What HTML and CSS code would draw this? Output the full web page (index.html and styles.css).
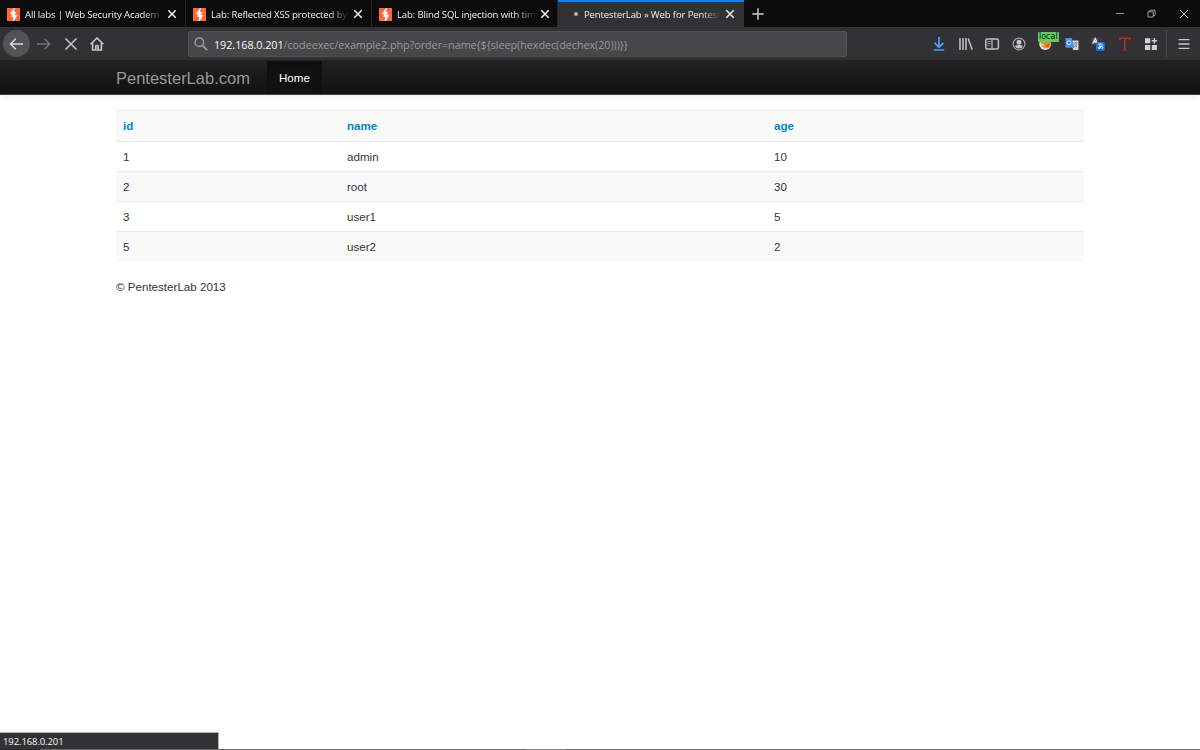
FILE: index.html
```
<!DOCTYPE html>
<html lang="en">
<head>
    <meta charset="UTF-8">
    <title>PentesterLab » Web for Pentester</title>
    <link rel="stylesheet" href="styles.css">
</head>
<body>
    <!-- shared icons -->
    <svg class="sprite">
        <symbol id="bolt" viewBox="0 0 13 13">
            <rect width="13" height="13" fill="#ff6633"/>
            <path d="M7.2 0L2.8 5.8L5.9 6.8L3.4 8.3L6.3 9.3L5.6 13H6.6L10.4 7.3L7.3 6.2L9.6 4.5L6.9 3.5L8 0Z" fill="#fff"/>
        </symbol>
        <symbol id="close" viewBox="0 0 10 10">
            <path d="M1.3 1.3L8.7 8.7M8.7 1.3L1.3 8.7" fill="none" stroke="currentColor" stroke-width="1.5"/>
        </symbol>
    </svg>

    <div class="tabs">
        <div class="tab">
            <svg class="favicon"><use href="#bolt"/></svg>
            <span class="title">All labs | Web Security Academ</span>
            <svg class="close"><use href="#close"/></svg>
        </div>
        <div class="tab">
            <svg class="favicon"><use href="#bolt"/></svg>
            <span class="title">Lab: Reflected XSS protected by</span>
            <svg class="close"><use href="#close"/></svg>
        </div>
        <div class="tab">
            <svg class="favicon"><use href="#bolt"/></svg>
            <span class="title">Lab: Blind SQL injection with tim</span>
            <svg class="close"><use href="#close"/></svg>
        </div>
        <div class="tab active">
            <span class="throbber"></span>
            <span class="title">PentesterLab » Web for Pentest</span>
            <svg class="close"><use href="#close"/></svg>
        </div>
        <svg class="new-tab" viewBox="0 0 12 12"><path d="M6 0.3V11.7M0.3 6H11.7" stroke="#d0d0d0" stroke-width="1.4"/></svg>
        <div class="window-buttons">
            <svg width="8" height="10" viewBox="0 0 8 10"><path d="M0 4.5H8" stroke="#999" stroke-width="1"/></svg>
            <svg width="9" height="9" viewBox="0 0 9 9"><path d="M1 2.8H6.2V8H1ZM2.8 2.8V1.2H8V6.4H6.2" fill="none" stroke="#aaa" stroke-width="0.9"/></svg>
            <svg width="10" height="10" viewBox="0 0 10 10"><path d="M1 1L9 9M9 1L1 9" stroke="#c4c4c4" stroke-width="1"/></svg>
        </div>
    </div>

    <div class="toolbar">
        <div class="nav-buttons">
            <span class="back"><svg width="16" height="16" viewBox="0 0 16 16"><path d="M14 8H1.8M6.8 2.8L1.6 8L6.8 13.2" fill="none" stroke="#d8d8d9" stroke-width="1.6"/></svg></span>
            <svg width="16" height="16" viewBox="0 0 16 16"><path d="M1 8H13.8M8.5 2.8L13.8 8L8.5 13.2" fill="none" stroke="#727274" stroke-width="1.5"/></svg>
            <svg width="14" height="14" viewBox="0 0 14 14"><path d="M1.5 1.5L12.5 12.5M12.5 1.5L1.5 12.5" stroke="#c8c8c9" stroke-width="1.5"/></svg>
            <svg width="14" height="14" viewBox="0 0 14 14"><path d="M0.6 7.2L7 1L13.4 7.2M2.6 6V13H11.4V6" fill="none" stroke="#c8c8c9" stroke-width="1.6"/><path d="M5.5 13V8.3H8.5V13" fill="#999" stroke="#c8c8c9" stroke-width="1"/></svg>
        </div>
        <div class="urlbar">
            <svg width="14" height="14" viewBox="0 0 14 14"><circle cx="5.3" cy="5.3" r="4.3" fill="none" stroke="#98989a" stroke-width="1.5"/><path d="M8.5 8.5L13.2 13.2" stroke="#98989a" stroke-width="1.8"/></svg>
            <span class="url"><b>192.168.0.201</b>/codeexec/example2.php?order=name{${sleep(hexdec(dechex(20)))}}</span>
        </div>
        <div class="extensions">
            <svg viewBox="0 0 16 16"><path d="M8 1V11M3.5 6.8L8 11.2L12.5 6.8M2.8 14H13.2" fill="none" stroke="#45a1ff" stroke-width="1.7"/></svg>
            <svg viewBox="0 0 16 16"><path d="M2 2V14M5 2V14M8 2V14M10.2 2.6L14.2 13.8" fill="none" stroke="#bbbbbc" stroke-width="1.6"/></svg>
            <svg viewBox="0 0 16 16"><rect x="1.8" y="2.9" width="12.6" height="10.2" rx="1.7" fill="none" stroke="#c0c0c1" stroke-width="1.5"/><path d="M8 3V13" stroke="#c0c0c1" stroke-width="1.2"/><path d="M3.5 5.5H6.5M3.5 7.5H6.5M3.5 9.3H5.5" stroke="#99999a" stroke-width="1"/></svg>
            <svg viewBox="0 0 16 16"><circle cx="8" cy="8" r="5.9" fill="none" stroke="#a5a5a6" stroke-width="1.2"/><circle cx="8" cy="6.3" r="2.5" fill="#c5c5c6"/><path d="M4 10.2C5.5 8.7 10.5 8.7 12 10.2Q10.8 12.4 8 12.4T4 10.2Z" fill="#c5c5c6"/></svg>
            <span class="foxy">
                <svg viewBox="0 0 16 16"><circle cx="8.2" cy="8" r="6" fill="#e8e3dc"/><path d="M3.2 7Q5 3 9 3T14.2 7Q14 11 10.5 12.4Q5.8 12.3 4 9.6L7.8 9.4L5 8Z" fill="#f18d28"/><path d="M7.5 10.5L12.5 6.5L11.8 10.7Z" fill="#b8651f"/></svg>
                <span class="badge">local</span>
            </span>
            <svg viewBox="0 0 16 16"><path d="M7 4.5H14.5V14H9Z" fill="#d5d5d5"/><path d="M1.5 2H7.8L10.5 11.7H1.5Z" fill="#4f8df5"/><circle cx="5" cy="6.7" r="1.9" fill="none" stroke="#dbe8ff" stroke-width="0.9"/><path d="M5 6.7H7M9.5 7H13.5M11.5 6V7M13 7L10.5 11M10.5 8.5L13 11" fill="none" stroke="#777" stroke-width="0.9"/></svg>
            <svg viewBox="0 0 16 16"><rect x="1.5" y="1.5" width="8" height="8" rx="1" fill="#454547"/><path d="M2.7 7.8L5.3 2.5L7.5 7.8M3.6 6H6.8" fill="none" stroke="#eee" stroke-width="1.3"/><rect x="6" y="6" width="8.7" height="8.7" rx="1.5" fill="#1677f2"/><path d="M8 8.2H12.5M10 7.2V12.7M12 9.5Q11.3 12 8.7 12.5Q7 11 10.8 10.4T12 13" fill="none" stroke="#fff" stroke-width="0.8"/></svg>
            <svg viewBox="0 0 16 16"><path d="M3 4V2.2H12.7V4M7.8 2.2V14M6.6 14H9.2" fill="none" stroke="#b93022" stroke-width="1.4"/></svg>
            <svg viewBox="0 0 16 16"><path d="M2 2.3H7.2V7.3H2ZM2 9H7.2V14H2ZM8.8 9H13.9V14H8.8Z" fill="#d0d0d1"/><path d="M11.4 2V7.4M8.7 4.7H14.1" stroke="#d0d0d1" stroke-width="1.5"/></svg>
        </div>
        <div class="menu">
            <svg width="12" height="12" viewBox="0 0 12 12"><path d="M0.5 1.7H11.5M0.5 6H11.5M0.5 10.3H11.5" stroke="#c8c8c9" stroke-width="1.3"/></svg>
        </div>
    </div>

    <div class="navbar">
        <a class="brand">PentesterLab.com</a>
        <a class="nav-link">Home</a>
    </div>

    <div class="container">
        <table>
            <tr><th>id</th><th>name</th><th>age</th></tr>
            <tr><td>1</td><td>admin</td><td>10</td></tr>
            <tr><td>2</td><td>root</td><td>30</td></tr>
            <tr><td>3</td><td>user1</td><td>5</td></tr>
            <tr><td>5</td><td>user2</td><td>2</td></tr>
        </table>
        <footer>© PentesterLab 2013</footer>
    </div>

    <div class="status">192.168.0.201</div>
    <div class="bottom-edge"></div>
</body>
</html>
```
FILE: styles.css
```
* {
    box-sizing: border-box;
}
body {
    margin: 0;
    height: 750px;
    overflow: hidden;
    display: flex;
    flex-direction: column;
    background: #fff;
    color: #333;
    font-family: "Liberation Sans", Arial, sans-serif;
    font-size: 11.6px;
}
svg {
    display: block;
    flex: none;
}
.sprite {
    display: none;
}

/* tab strip */
.tabs {
    display: flex;
    align-items: center;
    flex: none;
    height: 27px;
    background: #0c0c0d;
    color: #f0f0f1;
    font-family: "Open Sans", "Noto Sans", sans-serif;
    font-size: 9.6px;
    letter-spacing: -0.15px;
}
.tab {
    display: flex;
    align-items: center;
    width: 186px;
    height: 27px;
    padding: 1px 8px 0 7px;
    border-right: 1px solid #29292a;
}
.tab.active {
    background: #323234;
    border-top: 2px solid #0a84ff;
    border-right: none;
    padding: 0 9px 1px 8px;
}
.favicon {
    width: 13px;
    height: 13px;
    margin-right: 5px;
}
.throbber {
    width: 4px;
    height: 4px;
    margin: 0 6px 0 8px;
    border-radius: 50%;
    background: #b5b5b6;
}
.title {
    flex: 1;
    white-space: nowrap;
    -webkit-mask-image: linear-gradient(to left, transparent, #000 20px);
    mask-image: linear-gradient(to left, transparent, #000 20px);
}
.close {
    width: 10px;
    height: 10px;
    margin-left: 4px;
}
.new-tab {
    width: 12px;
    height: 12px;
    margin-left: 8px;
}
.window-buttons {
    display: flex;
    align-items: center;
    gap: 23px;
    margin: 0 11px 0 auto;
}

/* toolbar */
.toolbar {
    display: flex;
    align-items: center;
    flex: none;
    height: 33px;
    background: #323234;
}
.nav-buttons {
    display: flex;
    align-items: center;
    width: 188px;
    padding-left: 3px;
    gap: 12px;
}
.back {
    display: flex;
    align-items: center;
    justify-content: center;
    width: 27px;
    height: 27px;
    margin-right: -6px;
    border-radius: 50%;
    background: #535355;
}
.urlbar {
    display: flex;
    align-items: center;
    width: 659px;
    height: 26px;
    padding-left: 5px;
    border: 1px solid #525254;
    border-radius: 2px;
    background: #474749;
    color: #98989a;
    font-family: "Open Sans", "Noto Sans", sans-serif;
    font-size: 10.8px;
    letter-spacing: -0.05px;
}
.url {
    margin: 1px 0 0 6px;
    white-space: nowrap;
}
.url b {
    font-weight: normal;
    color: #f9f9fa;
}
.extensions {
    display: flex;
    align-items: center;
    gap: 10.5px;
    margin-left: auto;
}
.extensions svg {
    width: 16px;
    height: 16px;
}
.foxy {
    position: relative;
}
.badge {
    position: absolute;
    left: 1px;
    top: -4px;
    height: 10px;
    padding: 0 1px;
    border-radius: 1px;
    background: #5fcb62;
    color: #0c220c;
    font: 8px/9px "DejaVu Sans", sans-serif;
    letter-spacing: 0;
}
.menu {
    display: flex;
    align-items: center;
    height: 28px;
    margin-left: 7px;
    padding: 0 10px 0 11px;
    border-left: 1px solid #48484a;
}

/* page */
.navbar {
    display: flex;
    align-items: center;
    flex: none;
    height: 35px;
    padding-left: 116px;
    border-bottom: 1px solid #444;
    background: linear-gradient(#222, #111);
    box-shadow: 0 1px 8px rgba(0,0,0,0.1);
}
.brand {
    width: 151px;
    padding-top: 2px;
    color: #999;
    font-size: 16.5px;
}
.nav-link {
    display: flex;
    align-items: center;
    height: 33px;
    padding: 0 12px;
    background: #111;
    box-shadow: inset 0 2px 6px rgba(0,0,0,0.25);
    color: #fff;
}
.container {
    flex: 1;
    padding: 15px 116px 0;
}
table {
    width: 100%;
    table-layout: fixed;
    border-collapse: collapse;
}
th, td {
    height: 30px;
    padding: 0 7px;
    border-top: 1px solid #eaeaea;
    text-align: left;
}
tr:first-child th, tr:nth-child(4) td {
    height: 30.5px;
}
th {
    padding-bottom: 1px;
    color: #0088cc;
}
th:first-child {
    width: 224px;
}
th:nth-child(2) {
    width: 427px;
}
tr:nth-child(odd) {
    background: #f9f9f9;
}
footer {
    margin-top: 18px;
}
.status {
    flex: none;
    width: 219px;
    height: 17px;
    padding-left: 3px;
    border-top: 1px solid #b5b5b5;
    border-right: 1px solid #b5b5b5;
    background: #323234;
    color: #f9f9fa;
    font: 9.5px/17px "Open Sans", "Noto Sans", sans-serif;
    letter-spacing: -0.1px;
}
.bottom-edge {
    flex: none;
    height: 1px;
    background: linear-gradient(to right, #2b2b2b 40px, #666 40px, #666 526px, #8b8b8b 526px, #8b8b8b 566px, #666 566px);
}
```
